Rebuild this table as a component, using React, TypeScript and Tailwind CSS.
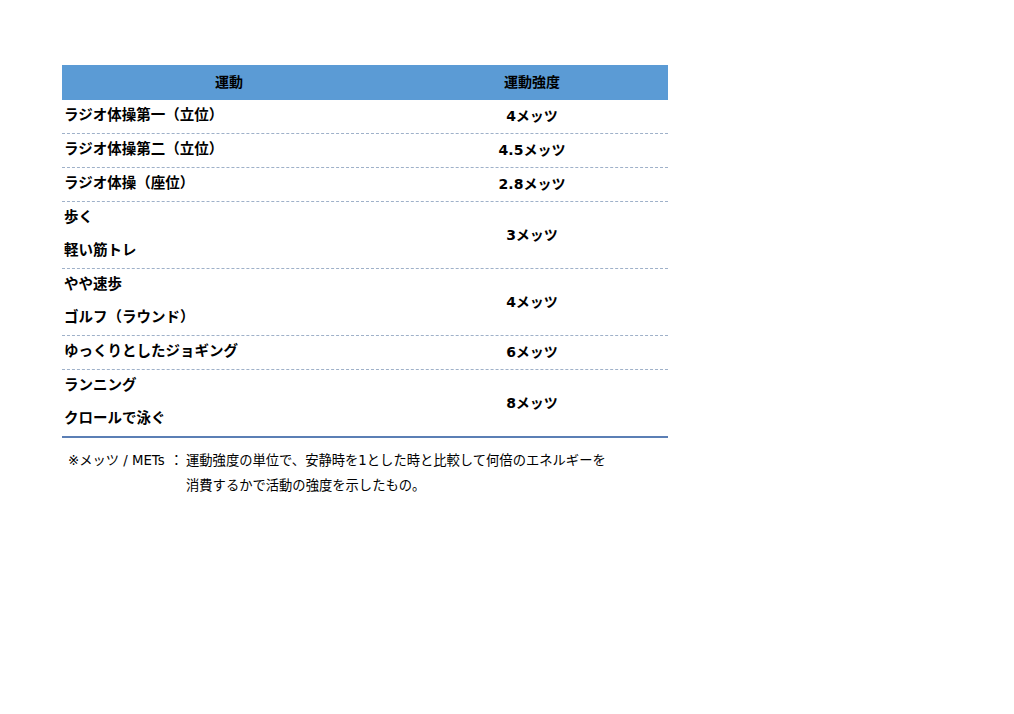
const rows: { names: string[]; mets: string }[] = [
  { names: ["ラジオ体操第一（立位）"], mets: "4メッツ" },
  { names: ["ラジオ体操第二（立位）"], mets: "4.5メッツ" },
  { names: ["ラジオ体操（座位）"], mets: "2.8メッツ" },
  { names: ["歩く", "軽い筋トレ"], mets: "3メッツ" },
  { names: ["やや速歩", "ゴルフ（ラウンド）"], mets: "4メッツ" },
  { names: ["ゆっくりとしたジョギング"], mets: "6メッツ" },
  { names: ["ランニング", "クロールで泳ぐ"], mets: "8メッツ" },
];

const font = {
  fontFamily: '"DejaVu Sans", "Noto Sans CJK JP", sans-serif',
};

export default function App() {
  return (
    <div className="w-[1014px] h-[714px] bg-white text-black" style={font}>
      <div className="pt-[65px] pl-[62px]">
        <div className="w-[606px]">
          <div className="flex h-[35px] bg-[#5b9bd5] text-[14px] font-bold items-center">
            <div className="w-[334px] text-center">運動</div>
            <div className="flex-1 text-center">運動強度</div>
          </div>
          {rows.map((r, i) => {
            const last = i === rows.length - 1;
            return (
              <div
                key={i}
                className={
                  last
                    ? "flex border-b-2 border-[#5b7fb5]"
                    : "flex border-b border-dashed border-[#9fb1c9]"
                }
              >
                <div className="w-[334px] pl-[2px] text-[14.5px] font-bold">
                  {r.names.map((n) => (
                    <div key={n} className="h-[33px] leading-[31px] whitespace-nowrap">
                      {n}
                    </div>
                  ))}
                </div>
                <div className="flex-1 flex items-center justify-center text-[14px] font-bold">
                  {r.mets}
                </div>
              </div>
            );
          })}
        </div>
        <div className="mt-[10px] text-[13.3px] leading-[25px]">
          <div className="flex">
            <div className="w-[124px] pl-[6px] pr-[3px] flex justify-between whitespace-nowrap">
              <span>※メッツ / METs</span>
              <span>：</span>
            </div>
            <div className="w-[440px]">
              運動強度の単位で、安静時を1とした時と比較して何倍のエネルギーを
              <br />
              消費するかで活動の強度を示したもの。
            </div>
          </div>
        </div>
      </div>
    </div>
  );
}
